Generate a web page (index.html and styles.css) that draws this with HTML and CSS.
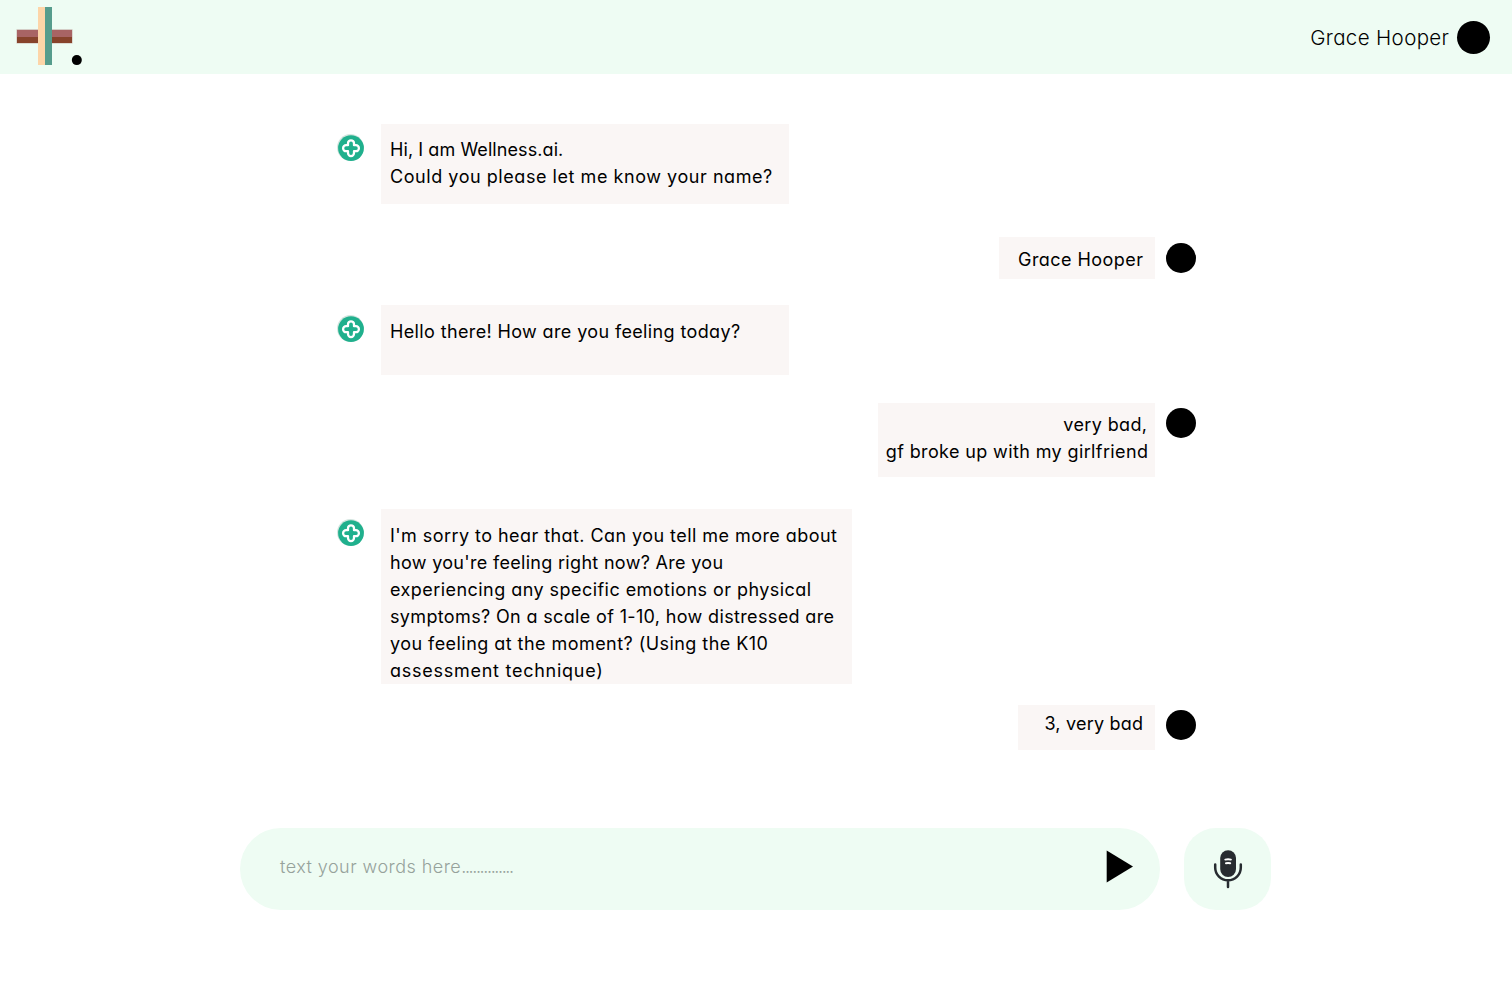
FILE: index.html
```
<!DOCTYPE html>
<html lang="en">
<head>
<meta charset="utf-8">
<title>Wellness.ai</title>
<link rel="stylesheet" href="styles.css">
</head>
<body>
<svg class="defs" width="0" height="0">
  <symbol id="bot" viewBox="0 0 28 28">
    <circle cx="13.4" cy="13.4" r="13.4" fill="#d3e5df"/>
    <circle cx="14" cy="14.1" r="12.9" fill="#20b08d"/>
    <path d="M11 11.2V9.3a3 3 0 0 1 6 0v1.9h1.9a3 3 0 0 1 0 6H17v1.9a3 3 0 0 1-6 0v-1.9H9.1a3 3 0 0 1 0-6z" fill="none" stroke="#fff" stroke-width="2.3" stroke-linejoin="round"/>
  </symbol>
</svg>
<header class="topbar">
  <svg class="logo" width="84" height="74" viewBox="0 0 84 74">
    <rect x="16.5" y="29.3" width="56" height="14.2" fill="#c9b9b3"/>
    <rect x="17" y="30" width="55" height="7" fill="#a86464"/>
    <rect x="17" y="37" width="55" height="6" fill="#87432b"/>
    <rect x="38" y="7" width="7.5" height="58" fill="#fdd5a8"/>
    <rect x="45" y="7" width="7" height="58" fill="#569c8c"/>
    <circle cx="76.8" cy="60.1" r="5" fill="#000"/>
  </svg>
  <div class="user"><span class="user-name">Grace Hooper</span><span class="avatar avatar-lg"></span></div>
</header>
<main class="chat">
  <div class="row r1"><svg class="bot"><use href="#bot"/></svg><p class="bubble"><span class="l1">Hi, I am Wellness.ai.</span><span class="l2">Could you please let me know your name?</span></p></div>
  <div class="row me r2"><p class="bubble"><span class="l3">Grace Hooper</span></p><i class="avatar"></i></div>
  <div class="row r3"><svg class="bot"><use href="#bot"/></svg><p class="bubble"><span class="l4">Hello there! How are you feeling today?</span></p></div>
  <div class="row me r4"><p class="bubble"><span class="l5">very bad,</span><span class="l6">gf broke up with my girlfriend</span></p><i class="avatar"></i></div>
  <div class="row r5"><svg class="bot"><use href="#bot"/></svg><p class="bubble"><span class="l7">I'm sorry to hear that. Can you tell me more about</span><span class="l8">how you're feeling right now? Are you</span><span class="l9">experiencing any specific emotions or physical</span><span class="l10">symptoms? On a scale of 1-10, how distressed are</span><span class="l11">you feeling at the moment? (Using the K10</span><span class="l12">assessment technique)</span></p></div>
  <div class="row me r6"><p class="bubble"><span class="l13">3, very bad</span></p><i class="avatar"></i></div>
</main>
<footer class="composer">
  <div class="field"><span class="hint">text your words here<span class="dots">..............</span></span>
    <svg width="28" height="34" viewBox="0 0 28 34"><path d="M.7.6v32L27 16.6z"/></svg></div>
  <div class="mic"><svg width="30" height="40" viewBox="0 0 30 40"><rect x="7.2" y="1.2" width="15.8" height="26.8" rx="7.9" fill="#272b30"/><path d="M2.2 15.5v3a12.8 12.8 0 0 0 25.6 0v-3M15 31.5V38" fill="none" stroke="#272b30" stroke-width="2.5" stroke-linecap="round"/><path d="M12.3 10.6q2.8-.8 5.6 0M13 14.3q2.1-.5 4.2 0" fill="none" stroke="#fff" stroke-width="2" stroke-linecap="round"/></svg></div>
</footer>
</body>
</html>
```
FILE: styles.css
```
* { box-sizing: border-box; }
body { margin: 0; height: 982px; overflow: hidden; background: #fff; color: #000; font: 18px/27px Inter, "Open Sans", sans-serif; font-feature-settings: "cv11"; }
.defs { position: absolute; }
.topbar { display: flex; justify-content: space-between; height: 74px; background: #eefcf3; padding-right: 22px; }
.user { display: flex; align-items: center; gap: 8px; }
.user-name { font-size: 20.5px; font-weight: 300; letter-spacing: .37px; margin-right: -.37px; }
.avatar { width: 30px; height: 30px; border-radius: 50%; background: #000; margin: 6px 0 0 11px; }
.avatar-lg { width: 33px; height: 33px; margin: 0; }
.chat { width: 859px; margin: 50px 0 0 337px; height: 704px; }
.row { display: flex; align-items: flex-start; }
.me { justify-content: flex-end; }
.bot { width: 28px; height: 28px; margin: 10px 16px 0 0; }
.bubble { margin: 0; background: #faf6f5; padding: 12px 9px 0; }
.bubble span { display: block; white-space: nowrap; }
.me .bubble { text-align: right; padding-right: 12px; }
.r1 .bubble { width: 408px; height: 80px; }
.r2 { margin-top: 33px; }
.r2 .bubble { width: 156px; height: 42px; padding-top: 9px; }
.r3 { margin-top: 26px; }
.r3 .bubble { width: 408px; height: 70px; padding-top: 13px; }
.r4 { margin-top: 28px; }
.r4 .bubble { width: 277px; height: 74px; padding: 8px 7px 0 0; }
.r4 .avatar, .r6 .avatar { margin-top: 5px; }
.r5 { margin-top: 32px; }
.r5 .bubble { width: 471px; height: 175px; padding-top: 13px; }
.r6 { margin-top: 21px; }
.r6 .bubble { width: 137px; height: 45px; padding-top: 5px; }
.l1 { letter-spacing: .08px; }
.l2 { letter-spacing: .55px; }
.l3 { letter-spacing: .45px; margin-right: -.45px; }
.l4 { letter-spacing: .37px; }
.l5 { letter-spacing: .38px; margin-right: .6px; }
.l6 { letter-spacing: .38px; margin-right: -.38px; }
.l7 { letter-spacing: .44px; }
.l8 { letter-spacing: .31px; }
.l9 { letter-spacing: .45px; }
.l10 { letter-spacing: .35px; }
.l11 { letter-spacing: .45px; }
.l12 { letter-spacing: .74px; }
.l13 { letter-spacing: .2px; margin-right: -.2px; }
.composer { display: flex; gap: 24px; margin-left: 240px; }
.field { width: 920px; height: 82px; border-radius: 41px; background: #eefcf3; display: flex; justify-content: space-between; align-items: center; padding: 0 26px 4px 40px; }
.hint { color: #96a29b; font-weight: 350; letter-spacing: .46px; padding-bottom: 2px; }
.dots { letter-spacing: -1.4px; }
.mic { width: 87px; height: 82px; border-radius: 32px; background: #eefcf3; display: flex; align-items: center; justify-content: center; }
```
